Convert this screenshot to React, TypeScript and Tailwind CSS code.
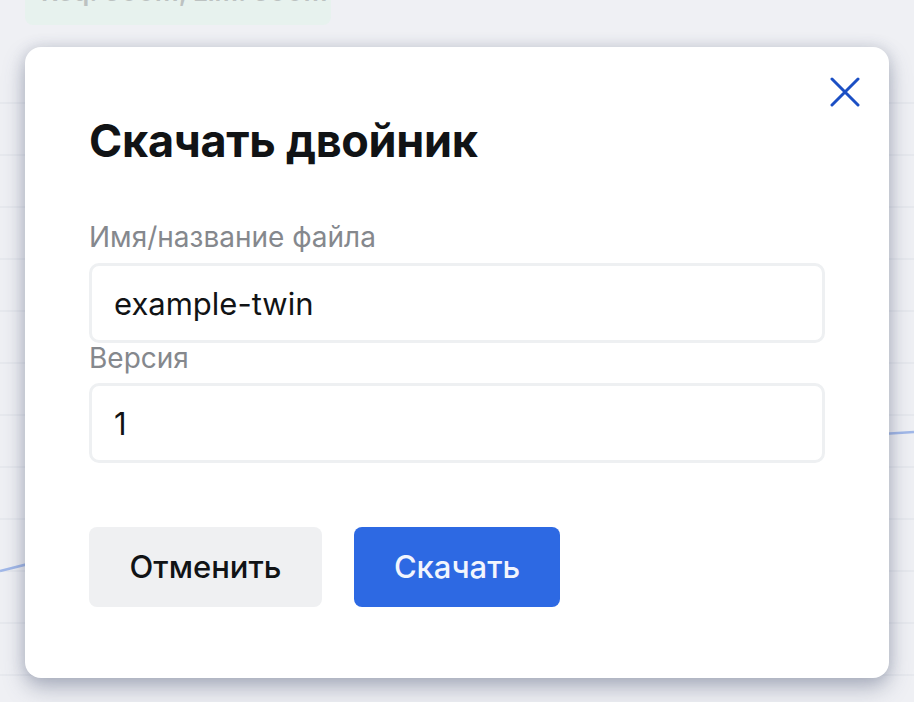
import React, { useState } from 'react';

const gridRows = [103, 155, 207, 259, 311, 363, 415, 467, 519, 571, 623, 675];

const DownloadTwinModal: React.FC<{ onClose?: () => void }> = ({ onClose }) => {
  const [name, setName] = useState('example-twin');
  const [version, setVersion] = useState('1');

  return (
    <div className="relative w-[864px] h-[631px] bg-white rounded-[16px] shadow-[0_10px_22px_rgba(70,82,112,0.38),0_0_14px_rgba(90,100,130,0.18)] px-[64px] pt-[70px]">
      <button
        type="button"
        onClick={onClose}
        className="absolute top-[27px] right-[26px] w-[36px] h-[36px] flex items-center justify-center text-[#1b4fc4]"
        aria-label="Закрыть"
      >
        <svg width="30" height="30" viewBox="0 0 30 30" fill="none">
          <path d="M2 2L28 28M28 2L2 28" stroke="currentColor" strokeWidth="3" strokeLinecap="round" />
        </svg>
      </button>

      <h2 className="text-[45px] leading-[48px] font-bold text-[#111315] tracking-[-0.3px]">Скачать двойник</h2>

      <div className="mt-[55px] flex flex-col">
        <label className="text-[28px] leading-[34px] text-[#85888d]">Имя/название файла</label>
        <input
          value={name}
          onChange={(e) => setName(e.target.value)}
          className="mt-[9px] w-[736px] h-[80px] rounded-[10px] border-[3px] border-[#eef0f2] px-[22px] text-[31px] text-[#111315] outline-none"
        />
        <label className="text-[28px] leading-[30px] text-[#85888d]">Версия</label>
        <input
          value={version}
          onChange={(e) => setVersion(e.target.value)}
          className="mt-[10px] w-[736px] h-[80px] rounded-[10px] border-[3px] border-[#eef0f2] px-[22px] text-[31px] text-[#111315] outline-none"
        />
      </div>

      <div className="mt-[64px] flex gap-[32px]">
        <button
          type="button"
          onClick={onClose}
          className="w-[233px] h-[80px] rounded-[8px] bg-[#eff0f2] text-[31px] font-medium text-[#111315]"
        >
          Отменить
        </button>
        <button
          type="button"
          className="w-[206px] h-[80px] rounded-[8px] bg-[#2d69e3] text-[31px] font-medium text-[#f2f5fd]"
        >
          Скачать
        </button>
      </div>
    </div>
  );
};

const App: React.FC = () => {
  return (
    <div className="relative w-[914px] h-[702px] overflow-hidden bg-[#f4f5f8] font-['Inter','Noto_Sans',sans-serif]">
      {/* page behind the dialog: resource tag and a faint chart */}
      <div className="ml-[25px] mt-[-22px] w-[306px] h-[47px] rounded-[8px] bg-[#e8f7ee] flex items-end pl-[16px] pb-[20px]">
        <span className="text-[26px] leading-[26px] font-semibold text-[#a7aea9]">Req: 500M, Lim: 500M</span>
      </div>
      <svg className="absolute inset-0" width="914" height="702" viewBox="0 0 914 702">
        {gridRows.map((y) => (
          <line key={y} x1="0" x2="914" y1={y} y2={y} stroke="#e4e6ec" strokeWidth="1.5" />
        ))}
        <path d="M0 571 C 200 520, 600 450, 914 432" stroke="#7d9fe6" strokeWidth="2.5" fill="none" />
      </svg>

      {/* dimmed layer with the dialog */}
      <div className="absolute inset-0 bg-[rgba(228,231,239,0.35)] flex justify-center pt-[47px]">
        <DownloadTwinModal />
      </div>
    </div>
  );
};

export default App;
